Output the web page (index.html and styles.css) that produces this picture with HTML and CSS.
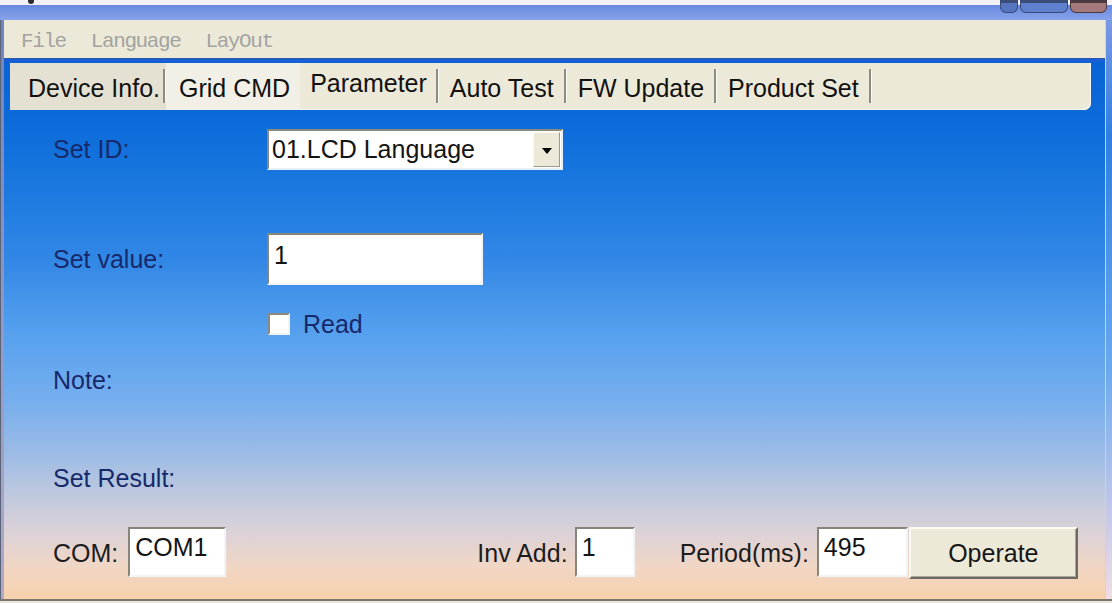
FILE: index.html
```html
<!DOCTYPE html>
<html lang="en">
<head>
<meta charset="utf-8">
<title>Parameter</title>
<link rel="stylesheet" href="styles.css">
</head>
<body>
<div class="window">
  <header class="titlebar">
    <span class="app-icon"></span>
    <div class="caption-btns">
      <span class="cap cap-min"></span>
      <span class="cap cap-max"></span>
      <span class="cap cap-close"></span>
    </div>
  </header>

  <div class="frame">
    <div class="frame-left"></div>

    <div class="client">
      <nav class="menubar">
        <span class="menu-item">File</span>
        <span class="menu-item">Language</span>
        <span class="menu-item">LayOut</span>
      </nav>
      <div class="menu-rule"></div>

      <main class="panel">
        <ul class="tabs">
          <li class="tab tab-first">Device Info.</li>
          <li class="tab tab-light">Grid CMD</li>
          <li class="tab tab-active">Parameter</li>
          <li class="tab">Auto Test</li>
          <li class="tab">FW Update</li>
          <li class="tab">Product Set</li>
        </ul>

        <section class="form">
          <div class="row row-id">
            <span class="label">Set ID:</span>
            <div class="combo">
              <span class="combo-text">01.LCD Language</span>
              <span class="combo-btn"><span class="arrow"></span></span>
            </div>
          </div>

          <div class="row row-value">
            <span class="label">Set value:</span>
            <div class="field field-value">1</div>
          </div>

          <div class="row row-read">
            <span class="label"></span>
            <span class="checkbox"></span>
            <span class="check-label">Read</span>
          </div>

          <div class="row row-note">
            <span class="label">Note:</span>
          </div>

          <div class="row row-result">
            <span class="label">Set Result:</span>
          </div>

          <div class="row row-bottom">
            <span class="blabel">COM:</span>
            <div class="field field-com">COM1</div>
            <span class="blabel blabel-inv">Inv Add:</span>
            <div class="field field-inv">1</div>
            <span class="blabel blabel-period">Period(ms):</span>
            <div class="field field-period">495</div>
            <button class="btn-operate" type="button">Operate</button>
          </div>
        </section>
      </main>
    </div>

    <div class="frame-right"></div>
  </div>

  <div class="frame-bottom"></div>
</div>
</body>
</html>
```

FILE: styles.css
```css
* {
  box-sizing: border-box;
  margin: 0;
  padding: 0;
}

html,
body {
  width: 1112px;
  height: 603px;
  overflow: hidden;
}

body {
  font-family: "Liberation Sans", Arial, sans-serif;
  background: #efece6;
}

.window {
  width: 1112px;
  height: 603px;
  display: flex;
  flex-direction: column;
}

/* ---------- title bar ---------- */
.titlebar {
  height: 20px;
  flex: none;
  display: flex;
  align-items: flex-start;
  background: linear-gradient(#f2f2f4 0 5px, #6788de 5px, #88a3ea 20px);
}

.app-icon {
  width: 6px;
  height: 4px;
  margin-left: 28px;
  background: #2a2a30;
  border-radius: 0 0 3px 3px;
}

.caption-btns {
  margin-left: auto;
  margin-right: 5px;
  display: flex;
  gap: 2px;
}

.cap {
  height: 13px;
  border: 1px solid #3c4c78;
  border-top-width: 3px;
  border-radius: 0 0 6px 6px;
}

.cap-min {
  width: 18px;
  background: #5674c0;
}

.cap-max {
  width: 48px;
  background: #5f80cc;
}

.cap-close {
  width: 37px;
  background: #a47a7c;
  border-color: #4a3a40;
}

/* ---------- frame ---------- */
.frame {
  flex: 1;
  display: flex;
  min-height: 0;
}

.frame-left {
  width: 4px;
  flex: none;
  background: linear-gradient(#6f82c4, #8d98c8 50%, #b3a8c4);
  border-left: 1px solid #5a6478;
}

.frame-right {
  width: 7px;
  flex: none;
  border-left: 1px solid #c4d4ee;
  background: linear-gradient(#7c98e2 0, #2f7ee2 20%, #6aa8ee 60%, #c4c8e8 85%, #f0dce4);
}

.frame-bottom {
  height: 4px;
  flex: none;
  border-top: 2px solid #7c776c;
  background: #ebe6dc;
}

.client {
  flex: 1;
  display: flex;
  flex-direction: column;
  min-width: 0;
}

/* ---------- menu ---------- */
.menubar {
  height: 38px;
  flex: none;
  display: flex;
  align-items: center;
  gap: 25px;
  padding: 5px 0 0 17px;
  background: #ece9d9;
  font-family: "Liberation Mono", "Courier New", monospace;
  font-size: 21px;
  letter-spacing: -1.4px;
  color: #a3a3a0;
}

.menu-rule {
  height: 4px;
  flex: none;
  background: #1b5dd4;
  border-top: 1px solid #2c58a8;
}

/* ---------- panel ---------- */
.panel {
  flex: 1;
  display: flex;
  flex-direction: column;
  background: linear-gradient(
    #0a63d3 0,
    #0b6bd9 60px,
    #1a77df 120px,
    #3388e6 200px,
    #55a0ee 270px,
    #77afee 340px,
    #9bbbe6 390px,
    #bcc8de 430px,
    #dbd2d8 470px,
    #f1d6c4 505px,
    #f7d1ad 537px
  );
}

.tabs {
  list-style: none;
  height: 47px;
  margin: 1px 14px 0 6px;
  display: flex;
  align-items: center;
  background: #ece9d8;
  border-radius: 0 0 7px 0;
  box-shadow: inset -1px -1px 0 #f8f6ee;
  font-size: 25px;
  color: #111;
}

.tab {
  height: 100%;
  display: flex;
  align-items: center;
  padding: 3px 13px 0 11px;
  position: relative;
}

.tab::after {
  content: "";
  position: absolute;
  right: 0;
  top: 6px;
  bottom: 7px;
  width: 2px;
  background: #8e8c80;
  border-right: 1px solid #fafaf4;
}

.tab-first {
  padding-left: 18px;
  padding-right: 6px;
  background: #e4e1d2;
}

.tab-light {
  padding-left: 13px;
  padding-right: 10px;
  background: #f2f0e6;
}

.tab-light::after {
  display: none;
}

.tab-active {
  padding-top: 0;
  padding-bottom: 6px;
  padding-left: 10px;
  padding-right: 12px;
}

/* ---------- form ---------- */
.form {
  flex: 1;
  display: flex;
  flex-direction: column;
  padding-left: 49px;
  font-size: 25px;
}

.row {
  display: flex;
  align-items: center;
}

.label {
  width: 214px;
  flex: none;
  color: #17296a;
}

.row-id {
  margin-top: 19px;
  height: 41px;
}

.row-value {
  margin-top: 63px;
  height: 52px;
}

.row-read {
  margin-top: 28px;
  height: 22px;
}

.row-note {
  margin-top: 31px;
  height: 28px;
}

.row-result {
  margin-top: 70px;
  height: 28px;
}

.row-bottom {
  margin-top: 35px;
  height: 52px;
}

.combo {
  width: 296px;
  height: 41px;
  display: flex;
  align-items: center;
  background: #fff;
  border: 2px solid;
  border-color: #8a8a7c #e8f0f8 #e8f0f8 #8a8a7c;
  color: #141414;
}

.combo-text {
  flex: 1;
  padding-left: 3px;
}

.combo-btn {
  width: 27px;
  height: 35px;
  margin-right: 1px;
  display: flex;
  align-items: center;
  justify-content: center;
  background: #ece9d8;
  border: 1px solid;
  border-color: #fbfaf4 #9c9a8c #9c9a8c #fbfaf4;
}

.arrow {
  width: 0;
  height: 0;
  border-left: 5px solid transparent;
  border-right: 5px solid transparent;
  border-top: 6px solid #000;
  margin-top: 2px;
}

.field {
  height: 100%;
  background: #fff;
  border: 2px solid;
  border-color: #87857a #f2f4f6 #f2f4f6 #87857a;
  color: #141414;
  line-height: 28px;
  padding: 4px 0 0 5px;
}

.field-value {
  width: 216px;
  padding-top: 6px;
}

.checkbox {
  width: 22px;
  height: 22px;
  margin-left: 1px;
  background: #fff;
  border: 2px solid;
  border-color: #8c8a7e #f0f2f4 #f0f2f4 #8c8a7e;
}

.check-label {
  margin-left: 13px;
  color: #17296a;
}

.row-bottom .field {
  height: 50px;
  align-self: flex-start;
}

.blabel {
  color: #1c1c1c;
}

.field-com {
  width: 98px;
  margin-left: 10px;
}

.blabel-inv {
  margin-left: 251px;
}

.field-inv {
  width: 60px;
  margin-left: 7px;
}

.blabel-period {
  margin-left: 45px;
}

.field-period {
  width: 91px;
  margin-left: 8px;
}

.btn-operate {
  width: 169px;
  height: 52px;
  margin-left: 1px;
  align-self: flex-start;
  font: inherit;
  color: #161616;
  background: #ece9d8;
  border: 2px solid;
  border-color: #fbfaf2 #6c6a62 #6c6a62 #fbfaf2;
  box-shadow: inset -1px -1px 0 #a8a69a;
}
```
